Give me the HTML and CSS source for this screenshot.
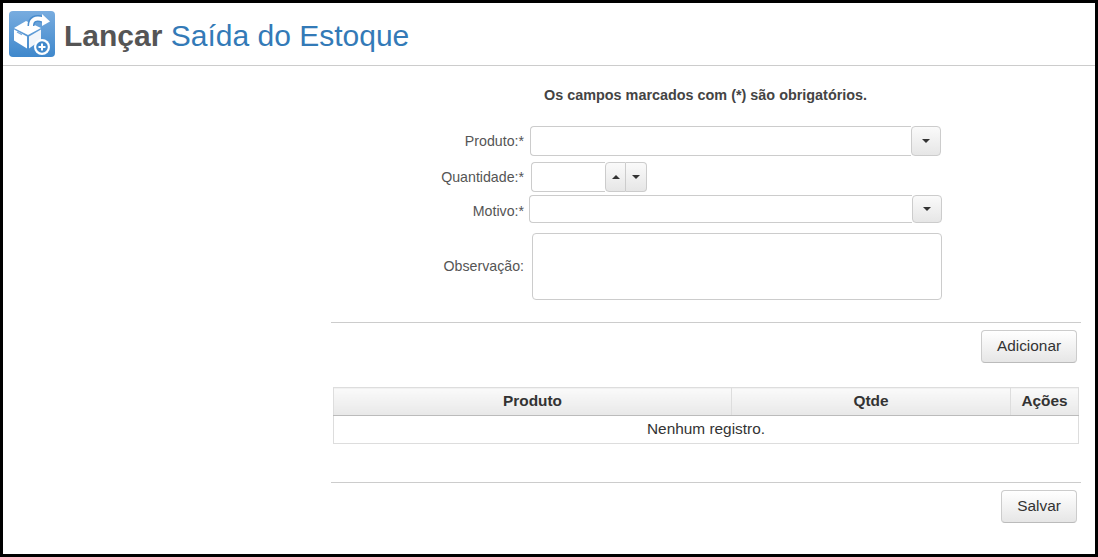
FILE: index.html
```html
<!DOCTYPE html>
<html lang="pt-BR">
<head>
  <meta charset="UTF-8" />
  <title>Lançar Saída do Estoque</title>
  <link rel="stylesheet" href="styles.css">
</head>
<body>
  <div class="page">
    <header class="header">
      <svg class="header-icon" width="46" height="46" viewBox="0 0 46 46">
        <defs>
          <linearGradient id="iconBg" x1="0" y1="0" x2="0" y2="1">
            <stop offset="0" stop-color="#78acdf" />
            <stop offset="1" stop-color="#3f88cc" />
          </linearGradient>
        </defs>
        <rect width="46" height="46" rx="4" fill="url(#iconBg)" />
        <path d="M5 17 L17 10 L32 17 L19 24 Z" fill="#fff" />
        <path d="M5 18.5 L18 25.5 V37.5 L5 29.5 Z" fill="#fff" />
        <path d="M20 25.5 L32 18.5 V29 L20 37.5 Z" fill="#f1f5fa" />
        <path d="M8 21 L13 23.6" stroke="#7aa9da" stroke-width="1.3" />
        <path d="M22 15 C22 8 27 6 34 8.5" fill="none" stroke="#4a8dcd" stroke-width="7" />
        <path d="M22 15 C22 8 27 6 34 8.5" fill="none" stroke="#fff" stroke-width="4" />
        <path d="M33 3 L41 10.5 L33 15 Z" fill="#fff" />
        <circle cx="33" cy="36" r="8" fill="#fff" />
        <circle cx="33" cy="36" r="5.8" fill="#4189cb" />
        <path d="M29.5 36 H36.5 M33 32.5 V39.5" stroke="#fff" stroke-width="2" />
      </svg>
      <h1 class="title"><strong>Lançar</strong> Saída do Estoque</h1>
    </header>

    <main class="content">
      <p class="required-note">Os campos marcados com (*) são obrigatórios.</p>

      <div class="form">
        <div class="row row-produto">
          <label class="row-label">Produto:*</label>
          <div class="combo combo-produto">
            <input class="combo-input" type="text" />
            <button class="combo-btn" type="button"><span class="caret"></span></button>
          </div>
        </div>
        <div class="row row-qtde">
          <label class="row-label">Quantidade:*</label>
          <div class="spinner">
            <input class="spinner-input" type="text" />
            <button class="spin-btn spin-first" type="button"><span class="caret caret-up"></span></button>
            <button class="spin-btn spin-last" type="button"><span class="caret"></span></button>
          </div>
        </div>
        <div class="row row-motivo">
          <label class="row-label">Motivo:*</label>
          <div class="combo combo-motivo">
            <input class="combo-input" type="text" />
            <button class="combo-btn" type="button"><span class="caret"></span></button>
          </div>
        </div>
        <div class="row row-obs">
          <label class="row-label">Observação:</label>
          <textarea class="obs-input"></textarea>
        </div>
      </div>

      <hr class="divider divider-form" />
      <div class="actions">
        <button class="btn btn-add" type="button">Adicionar</button>
      </div>

      <table class="grid">
        <thead>
          <tr>
            <th class="col-produto">Produto</th>
            <th class="col-qtde">Qtde</th>
            <th class="col-acoes">Ações</th>
          </tr>
        </thead>
        <tbody>
          <tr>
            <td colspan="3">Nenhum registro.</td>
          </tr>
        </tbody>
      </table>

      <hr class="divider divider-table" />
      <div class="actions">
        <button class="btn btn-save" type="button">Salvar</button>
      </div>
    </main>
  </div>
</body>
</html>
```

FILE: styles.css
```css
* {
  margin: 0;
  padding: 0;
  box-sizing: border-box;
}
html, body {
  width: 100%;
  height: 100%;
  overflow: hidden;
}
body {
  font-family: 'Liberation Sans', Arial, sans-serif;
  font-size: 14.4px;
  color: #333;
  background: #000;
}
.page {
  height: 551px;
  margin: 3px 3px 0 3px;
  background: #fff;
}
.header {
  height: 63px;
  border-bottom: 1px solid #ccc;
  display: flex;
  align-items: flex-start;
  padding: 8px 0 0 6px;
}
.header-icon {
  flex: none;
}
.title {
  margin: 8px 0 0 9px;
  font-size: 30px;
  line-height: 33px;
  font-weight: 400;
  color: #337ab7;
}
.title strong {
  font-weight: 700;
  color: #555;
}
.content {
  width: 750px;
  margin-left: 328px;
}
.required-note {
  margin-top: 21px;
  padding-left: 213px;
  line-height: 17px;
  font-weight: 700;
  color: #444;
}
.form {
  margin-top: 22px;
}
.row {
  display: flex;
  align-items: center;
}
.row-label {
  width: 193px;
  font-size: 14.2px;
  text-align: right;
  flex: none;
  color: #555;
}
.row-produto {
  height: 30px;
}
.row-qtde {
  height: 30px;
  margin-top: 6px;
}
.row-motivo {
  height: 28px;
  margin-top: 3px;
}
.row-motivo .row-label {
  padding-top: 4px;
}
.row-obs {
  height: 67px;
  margin-top: 10px;
}
.row-obs .row-label {
  padding-bottom: 2px;
}
.combo {
  display: flex;
  height: 100%;
  width: 411px;
}
.combo-produto {
  margin-left: 6px;
}
.combo-motivo {
  margin-left: 5px;
  width: 413px;
}
.combo-input, .spinner-input, .obs-input {
  border: 1px solid #ccc;
  border-radius: 4px 0 0 4px;
  background: #fff;
  outline: none;
}
.combo-input {
  flex: 1;
  min-width: 0;
  border-right: none;
}
.combo-btn, .spin-btn {
  flex: none;
  width: 30px;
  display: flex;
  align-items: center;
  justify-content: center;
  border: 1px solid #ccc;
  border-radius: 4px;
  background: linear-gradient(#fafafa, #e6e6e6);
}
.spinner {
  display: flex;
  height: 30px;
  margin-left: 7px;
}
.spinner-input {
  width: 74px;
  border-right: none;
}
.spin-btn {
  width: 21px;
}
.spin-first {
  border-radius: 4px 0 0 4px;
}
.spin-last {
  border-left: none;
  border-radius: 0 4px 4px 0;
}
.caret {
  width: 0;
  height: 0;
  border-left: 4px solid transparent;
  border-right: 4px solid transparent;
  border-top: 4px solid #333;
}
.caret-up {
  border-top: none;
  border-bottom: 4px solid #333;
}
.obs-input {
  width: 410px;
  height: 67px;
  margin-left: 8px;
  border-radius: 4px;
  resize: none;
}
.divider {
  border: none;
  border-top: 1px solid #ccc;
}
.divider-form {
  margin-top: 22px;
}
.divider-table {
  margin-top: 38px;
}
.actions {
  display: flex;
  justify-content: flex-end;
  padding: 7px 4px 0 0;
}
.btn {
  height: 33px;
  padding-bottom: 2px;
  font-family: inherit;
  font-size: 15.4px;
  color: #333;
  border: 1px solid #ccc;
  border-bottom-color: #bbb;
  border-radius: 4px;
  background: linear-gradient(#fff, #e6e6e6);
}
.btn-add {
  width: 96px;
}
.btn-save {
  width: 76px;
}
.grid {
  width: 746px;
  margin: 24px 0 0 2px;
  border-collapse: collapse;
  table-layout: fixed;
}
.grid th {
  height: 28px;
  padding-bottom: 2px;
  font-size: 15.4px;
  font-weight: 700;
  color: #333;
  border: 1px solid #ddd;
  border-bottom: 1px solid #bbb;
  background: linear-gradient(#fafafa, #e8e8e8);
}
.col-produto {
  width: 398px;
}
.col-qtde {
  width: 279px;
}
.grid td {
  height: 28px;
  padding-bottom: 2px;
  font-size: 15.4px;
  text-align: center;
  border: 1px solid #ddd;
  color: #333;
}
```
